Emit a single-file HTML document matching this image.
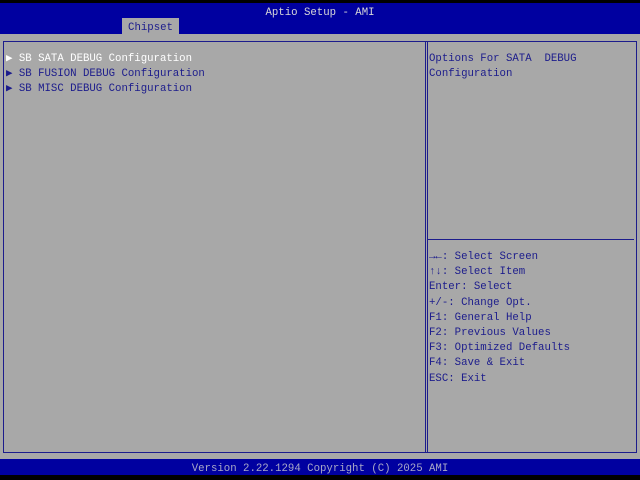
<!DOCTYPE html>
<html><head><style>
*{margin:0;padding:0}
body{width:640px;height:480px;background:#000;position:relative;overflow:hidden;font-family:"Liberation Mono","DejaVu Sans Mono",monospace;font-size:10.7px}
div{position:absolute;white-space:pre}
.t{color:#1c1c8c}
</style></head><body>
<div style="left:0;top:3px;width:640px;height:31px;background:#0000a0"></div>
<div style="left:0;top:7px;width:640px;text-align:center;color:#d8d8d8">Aptio Setup - AMI</div>
<div style="left:122px;top:18px;width:57px;height:16px;background:#a8a8a8;color:#1c1c8c;text-align:center;line-height:20px">Chipset</div>
<div style="left:0;top:34px;width:640px;height:425px;background:#a8a8a8"></div>
<div style="left:3px;top:41px;width:632px;height:410px;border:1px solid #1c1c8c"></div>
<div style="left:425px;top:41px;width:1px;height:412px;background:#1c1c8c"></div>
<div style="left:427px;top:41px;width:1px;height:412px;background:#1c1c8c"></div>
<div style="left:428px;top:239px;width:206px;height:1px;background:#1c1c8c"></div>
<div style="left:6px;top:52px;line-height:15px;color:#1c1c8c"><span style="color:#fff">▶ SB SATA DEBUG Configuration</span>
▶ SB FUSION DEBUG Configuration
▶ SB MISC DEBUG Configuration</div>
<div class="t" style="left:429px;top:52px;line-height:15px">Options For SATA  DEBUG
Configuration</div>
<div class="t" style="left:429px;top:250px;line-height:15.2px">→←: Select Screen
↑↓: Select Item
Enter: Select
+/-: Change Opt.
F1: General Help
F2: Previous Values
F3: Optimized Defaults
F4: Save &amp; Exit
ESC: Exit</div>
<div style="left:0;top:459px;width:640px;height:16px;background:#0000a0"></div>
<div style="left:0;top:463px;width:640px;text-align:center;color:#a8a8c8">Version 2.22.1294 Copyright (C) 2025 AMI</div>
</body></html>
